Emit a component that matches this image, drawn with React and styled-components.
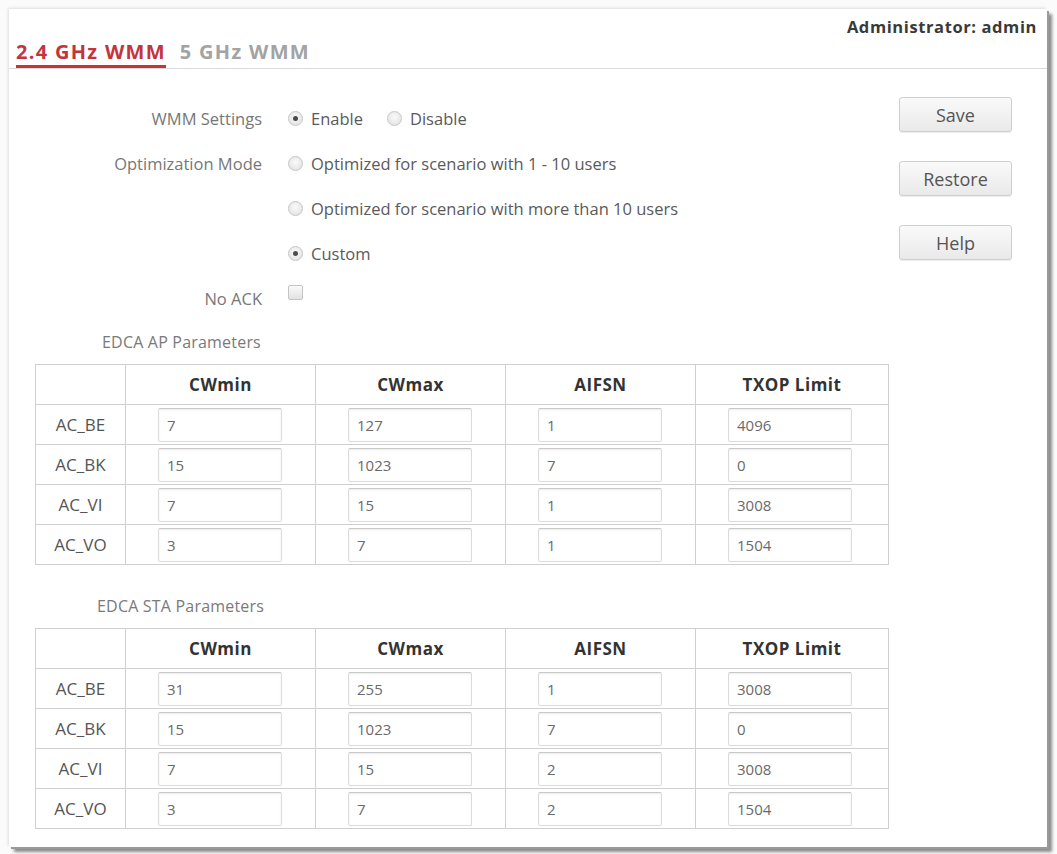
import React from "react";
import styled, { createGlobalStyle, css } from "styled-components";

const GlobalStyle = createGlobalStyle`
	html, body {
		margin: 0;
		padding: 0;
		background: #ffffff;
	}
	body {
		font-family: "Open Sans", "Noto Sans", "Liberation Sans", sans-serif;
	}
`;

const apRows = [
	{ name: "AC_BE", values: ["7", "127", "1", "4096"] },
	{ name: "AC_BK", values: ["15", "1023", "7", "0"] },
	{ name: "AC_VI", values: ["7", "15", "1", "3008"] },
	{ name: "AC_VO", values: ["3", "7", "1", "1504"] },
];

const staRows = [
	{ name: "AC_BE", values: ["31", "255", "1", "3008"] },
	{ name: "AC_BK", values: ["15", "1023", "7", "0"] },
	{ name: "AC_VI", values: ["7", "15", "2", "3008"] },
	{ name: "AC_VO", values: ["3", "7", "2", "1504"] },
];

const columns = ["CWmin", "CWmax", "AIFSN", "TXOP Limit"];

function ParamTable({ title, rows }) {
	return (
		<Section>
			<SectionTitle>{title}</SectionTitle>
			<Table>
				<colgroup>
					<col style={{ width: 90 }} />
					<col style={{ width: 190 }} />
					<col style={{ width: 190 }} />
					<col style={{ width: 190 }} />
					<col style={{ width: 193 }} />
				</colgroup>
				<thead>
					<tr>
						<HeadCell />
						{columns.map((c) => (
							<HeadCell key={c}>{c}</HeadCell>
						))}
					</tr>
				</thead>
				<tbody>
					{rows.map((r) => (
						<tr key={r.name}>
							<NameCell>{r.name}</NameCell>
							{r.values.map((v, i) => (
								<ValueCell key={i}>
									<ValueInput defaultValue={v} />
								</ValueCell>
							))}
						</tr>
					))}
				</tbody>
			</Table>
		</Section>
	);
}

function Radio({ checked, label }) {
	return (
		<Choice>
			<RadioDot $checked={checked} />
			<span>{label}</span>
		</Choice>
	);
}

export default function App() {
	return (
		<>
			<GlobalStyle />
			<Page>
				<Window>
					<Header>
						<Tabs>
							<Tab $active>2.4 GHz WMM</Tab>
							<Tab>5 GHz WMM</Tab>
						</Tabs>
						<Admin>Administrator: admin</Admin>
					</Header>

					<Body>
						<Main>
							<FormRow>
								<Label>WMM Settings</Label>
								<Options>
									<Radio checked label="Enable" />
									<Radio label="Disable" />
								</Options>
							</FormRow>
							<FormRow>
								<Label>Optimization Mode</Label>
								<Options>
									<Radio label="Optimized for scenario with 1 - 10 users" />
								</Options>
							</FormRow>
							<FormRow>
								<Label />
								<Options>
									<Radio label="Optimized for scenario with more than 10 users" />
								</Options>
							</FormRow>
							<FormRow>
								<Label />
								<Options>
									<Radio checked label="Custom" />
								</Options>
							</FormRow>
							<FormRow>
								<Label>No ACK</Label>
								<Options>
									<CheckBox />
								</Options>
							</FormRow>

							<ParamTable title="EDCA AP Parameters" rows={apRows} />
							<ParamTable title="EDCA STA Parameters" rows={staRows} />
						</Main>

						<Actions>
							<ActionButton>Save</ActionButton>
							<ActionButton>Restore</ActionButton>
							<ActionButton>Help</ActionButton>
						</Actions>
					</Body>
				</Window>
			</Page>
		</>
	);
}

const Page = styled.div`
	width: 1057px;
	height: 854px;
	box-sizing: border-box;
	padding: 9px 0 0 9px;
	background: #fbfbfb;
	overflow: hidden;
`;

const Window = styled.div`
	width: 1038px;
	height: 838px;
	background: #ffffff;
	box-shadow: 2px 2px 0 #9a9a9a, 5px 5px 3px rgba(0, 0, 0, 0.45),
		-1px -1px 3px rgba(0, 0, 0, 0.12);
	display: flex;
	flex-direction: column;
`;

const Header = styled.div`
	height: 60px;
	box-sizing: border-box;
	border-bottom: 1px solid #d9d9d9;
	display: flex;
	justify-content: space-between;
	padding: 0 10px 0 7px;
`;

const Tabs = styled.div`
	display: flex;
	align-items: flex-end;
	gap: 14px;
`;

const Tab = styled.div`
	font-size: 20px;
	font-weight: 700;
	line-height: 24px;
	padding-bottom: 1px;
	border-bottom: 3px solid transparent;
	color: #a3a3a3;
	letter-spacing: 1.3px;

	${(p) =>
		p.$active &&
		css`
			color: #c4343d;
			border-bottom-color: #c4343d;
		`}
`;

const Admin = styled.div`
	padding-top: 6px;
	font-size: 16.5px;
	line-height: 24px;
	font-weight: 700;
	letter-spacing: 0.6px;
	color: #3a3a3a;
`;

const Body = styled.div`
	flex: 1;
	display: flex;
`;

const Main = styled.div`
	width: 890px;
	padding-top: 27px;
`;

const FormRow = styled.div`
	height: 45px;
	display: flex;
	align-items: center;
	font-size: 16.5px;
`;

const Label = styled.div`
	width: 253px;
	text-align: right;
	color: #777777;
	padding-right: 26px;
	box-sizing: content-box;
`;

const Options = styled.div`
	display: flex;
	align-items: center;
	gap: 24px;
	color: #5a5a5a;
`;

const Choice = styled.label`
	display: flex;
	align-items: center;
	gap: 8px;
`;

const RadioDot = styled.span`
	width: 13px;
	height: 13px;
	border-radius: 50%;
	border: 1px solid #c6c6c6;
	background: radial-gradient(circle at 50% 40%, #fafafa, #dedede);
	display: flex;
	align-items: center;
	justify-content: center;

	&::after {
		content: "";
		width: 5px;
		height: 5px;
		border-radius: 50%;
		background: ${(p) => (p.$checked ? "#4a4a4a" : "transparent")};
	}
`;

const CheckBox = styled.span`
	width: 13px;
	height: 13px;
	margin-top: -12px;
	border: 1px solid #c4c4c4;
	border-radius: 2px;
	background: linear-gradient(#fafafa, #e2e2e2);
`;

const Section = styled.div`
	padding-left: 26px;
`;

const SectionTitle = styled.div`
	font-size: 16px;
	line-height: 20px;
	letter-spacing: 0.2px;
	color: #7a7a7a;
	padding: 11px 0 12px 67px;

	${Section} + ${Section} & {
		padding-top: 31px;
		padding-left: 62px;
	}
`;

const Table = styled.table`
	width: 853px;
	border-collapse: collapse;
	table-layout: fixed;
	font-size: 17px;
`;

const HeadCell = styled.th`
	height: 39px;
	border: 1px solid #d0d0d0;
	font-weight: 700;
	font-size: 17px;
	letter-spacing: 0.5px;
	color: #333333;
	text-align: center;
	padding: 0;
`;

const NameCell = styled.td`
	height: 39px;
	border: 1px solid #d0d0d0;
	text-align: center;
	color: #555555;
	padding: 0;
`;

const ValueCell = styled.td`
	height: 39px;
	border: 1px solid #d0d0d0;
	padding: 0 0 0 32px;
`;

const ValueInput = styled.input`
	display: block;
	width: 124px;
	height: 34px;
	box-sizing: border-box;
	border: 1px solid #dcdcdc;
	border-top-color: #c8c8c8;
	box-shadow: inset 0 1px 2px rgba(0, 0, 0, 0.08);
	border-radius: 2px;
	padding: 0 8px;
	font-family: "Open Sans", "Noto Sans", sans-serif;
	font-size: 15px;
	color: #6a6a6a;
	background: #ffffff;
	outline: none;
`;

const Actions = styled.div`
	width: 113px;
	padding-top: 28px;
	display: flex;
	flex-direction: column;
	gap: 29px;
`;

const ActionButton = styled.button`
	width: 113px;
	height: 35px;
	border: 1px solid #cfcfcf;
	border-radius: 3px;
	background: linear-gradient(#fafafa, #e9e9e9);
	box-shadow: 0 1px 1px rgba(0, 0, 0, 0.08);
	font-family: "Open Sans", "Noto Sans", sans-serif;
	font-size: 18px;
	color: #555555;
	padding: 0;
`;
